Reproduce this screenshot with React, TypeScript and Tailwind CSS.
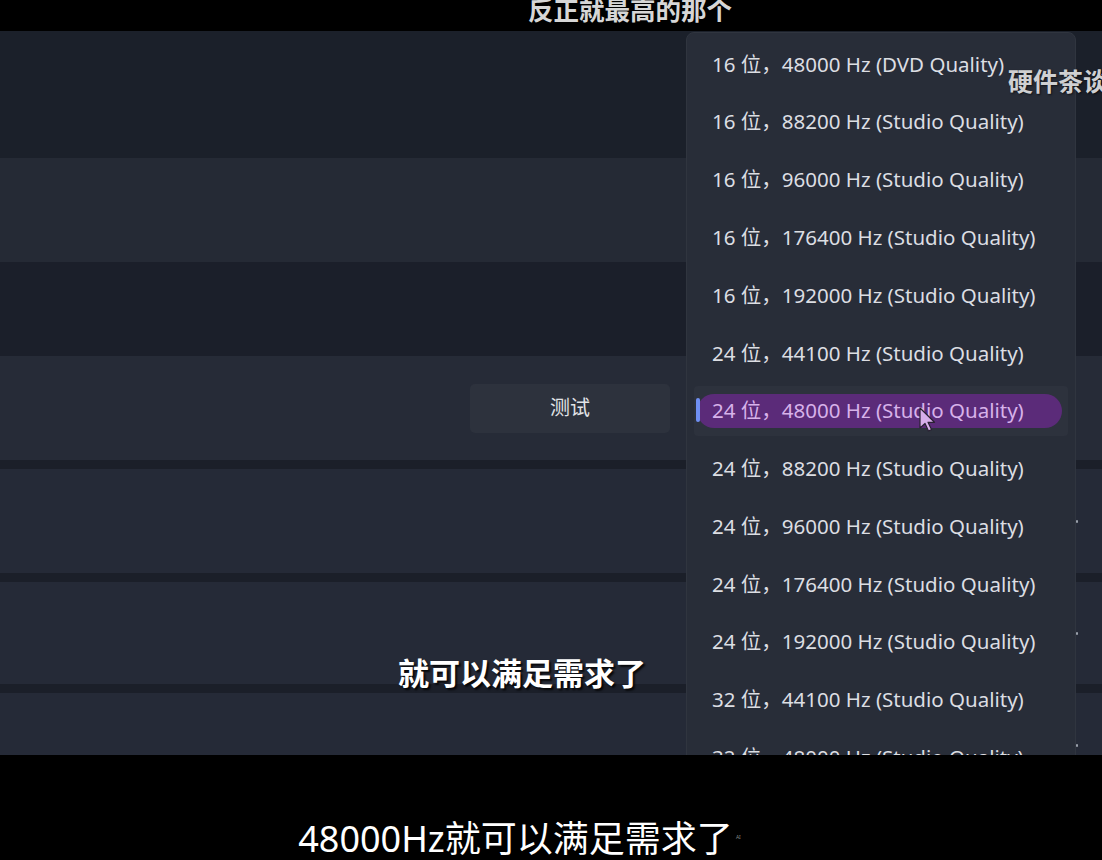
import React from "react";

const items = [
  "16 位，48000 Hz (DVD Quality)",
  "16 位，88200 Hz (Studio Quality)",
  "16 位，96000 Hz (Studio Quality)",
  "16 位，176400 Hz (Studio Quality)",
  "16 位，192000 Hz (Studio Quality)",
  "24 位，44100 Hz (Studio Quality)",
  "24 位，48000 Hz (Studio Quality)",
  "24 位，88200 Hz (Studio Quality)",
  "24 位，96000 Hz (Studio Quality)",
  "24 位，176400 Hz (Studio Quality)",
  "24 位，192000 Hz (Studio Quality)",
  "32 位，44100 Hz (Studio Quality)",
  "32 位，48000 Hz (Studio Quality)",
];

const uiFont = "font-['Noto_Sans','Noto_Sans_CJK_SC',sans-serif]";

function Chevron() {
  return <div className="ml-auto mr-[24px] h-[3px] w-[2px] rounded-full bg-[#9aa0ab]" />;
}

export default function App() {
  return (
    <div className={`w-[1102px] h-[860px] bg-black flex flex-col overflow-hidden ${uiFont}`}>
      {/* top black band with caption */}
      <div className="h-[31px] shrink-0 bg-black flex justify-center overflow-hidden">
        <div className="mt-[-6px] ml-[158px] text-[25.5px] leading-[30px] font-bold text-[#d6d6d6] font-['Noto_Sans_CJK_SC',sans-serif]">
          反正就最高的那个
        </div>
      </div>

      {/* content */}
      <div className="relative h-[724px] shrink-0 overflow-hidden bg-[#1b202a]">
        <div className="flex flex-col">
          <div className="h-[127px] bg-[#1b202a]" />
          <div className="h-[104px] bg-[#252a35]" />
          <div className="h-[94px] bg-[#1b1f2a]" />
          <div className="h-[104px] bg-[#262b37] flex items-center">
            <div className="ml-[470px] w-[200px] h-[49px] rounded-[5px] bg-[#2d323d] flex items-center justify-center text-[20px] text-[#e2e4e8]">
              测试
            </div>
          </div>
          <div className="h-[9px] bg-[#1b1f29]" />
          <div className="h-[104px] bg-[#252a37] flex items-center">
            <Chevron />
          </div>
          <div className="h-[9px] bg-[#1b1f29]" />
          <div className="h-[102px] bg-[#252a37] flex items-center">
            <Chevron />
          </div>
          <div className="h-[9px] bg-[#1b1f29]" />
          <div className="h-[104px] bg-[#252a37] flex items-center">
            <Chevron />
          </div>
        </div>

        {/* dropdown menu */}
        <div className="absolute left-[686px] top-[1px] w-[390px] h-[780px] rounded-[8px] bg-[#282d38] border border-[#30353f] pt-[2px] flex flex-col">
          {items.map((t, i) =>
            i === 6 ? (
              <div key={i} className="h-[57.8px] shrink-0 flex items-center px-[7px]">
                <div className="relative w-full h-[50px] rounded-[4px] bg-[#2d323d] flex items-center pl-[3px]">
                  <div className="h-[34px] w-[365px] rounded-full bg-[#5b2b79] flex items-center pl-[15px] text-[20.5px] text-[#d7b2ea] whitespace-nowrap">
                    {t}
                  </div>
                  <div className="absolute left-[2px] top-[12px] w-[4px] h-[24px] rounded-full bg-[#6f8ff2]" />
                </div>
              </div>
            ) : (
              <div key={i} className="h-[57.8px] shrink-0 flex items-center pl-[25px] text-[20.5px] text-[#dcdee3] whitespace-nowrap">
                {t}
              </div>
            )
          )}
        </div>

        {/* watermark */}
        <div className="absolute left-[1008px] top-[34px] text-[25px] leading-[30px] font-bold text-[#cfd0d2] whitespace-nowrap font-['Noto_Sans_CJK_SC',sans-serif] [text-shadow:1px_1px_2px_rgba(0,0,0,0.6)]">
          硬件茶谈
        </div>

        {/* cursor */}
        <svg className="absolute left-[918px] top-[376px]" width="18" height="26" viewBox="0 0 18 26">
          <path d="M2 1 L2 21 L7 16.5 L10.5 24 L13.5 22.6 L10 15.3 L16.5 15.3 Z" fill="#d7aeea" stroke="#2a2233" strokeWidth="1.2" strokeLinejoin="round" />
        </svg>

        {/* in-video subtitle */}
        <div className="absolute left-[398px] top-[621px] text-[31px] leading-[40px] font-bold text-white whitespace-nowrap font-['Noto_Sans_CJK_SC',sans-serif] [text-shadow:2px_2px_2px_rgba(0,0,0,0.85)]">
          就可以满足需求了
        </div>
      </div>

      {/* bottom black band */}
      <div className="flex-1 bg-black flex justify-center items-end">
        <div className="relative ml-[-71px] mb-[-1px] text-[36px] leading-[44px] text-white whitespace-nowrap font-['Noto_Sans','Noto_Sans_CJK_SC',sans-serif]">
          48000Hz就可以满足需求了
          <span className="absolute right-[-8px] top-[-2px] text-[5px] text-[#888]">AI</span>
        </div>
      </div>
    </div>
  );
}
